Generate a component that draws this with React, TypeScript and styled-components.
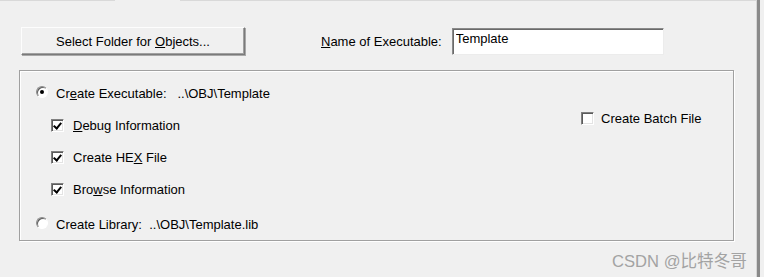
import React from 'react';
import styled, { createGlobalStyle } from 'styled-components';

const GlobalStyle = createGlobalStyle`
  html, body {
    margin: 0;
    padding: 0;
    background: #f0f0f0;
  }
  body {
    font-family: 'Liberation Sans', Arial, sans-serif;
    font-size: 13px;
    color: #000;
  }
`;

export default function App() {
  return (
    <>
      <GlobalStyle />
      <Page>
        <Panel>
          <TabEdge>
            <EdgeSegment $width={115} />
            <EdgeGap />
            <EdgeSegment />
          </TabEdge>
          <TopRow>
            <PushButton>
              Select Folder for <u>O</u>bjects...
            </PushButton>
            <NameField>
              <Label>
                <u>N</u>ame of Executable:
              </Label>
              <TextInput defaultValue="Template" />
            </NameField>
          </TopRow>
          <GroupBox>
            <LeftColumn>
              <OptionRow>
                <Radio $checked />
                <RadioText>
                  Cr<u>e</u>ate Executable:&nbsp;&nbsp;&nbsp;..\OBJ\Template
                </RadioText>
              </OptionRow>
              <SubRow $top={14}>
                <CheckBox $checked />
                <CheckText>
                  <u>D</u>ebug Information
                </CheckText>
              </SubRow>
              <SubRow $top={14}>
                <CheckBox $checked />
                <CheckText>
                  Create HE<u>X</u> File
                </CheckText>
              </SubRow>
              <SubRow $top={14}>
                <CheckBox $checked />
                <CheckText>
                  Bro<u>w</u>se Information
                </CheckText>
              </SubRow>
              <OptionRow $top={17}>
                <Radio />
                <RadioText>Create Library:&nbsp;&nbsp;..\OBJ\Template.lib</RadioText>
              </OptionRow>
            </LeftColumn>
            <RightColumn>
              <SubRow>
                <CheckBox />
                <CheckText $gap={7}>Create Batch File</CheckText>
              </SubRow>
            </RightColumn>
          </GroupBox>
        </Panel>
        <Watermark>CSDN @比特冬哥</Watermark>
      </Page>
    </>
  );
}

const Page = styled.div`
  position: relative;
  width: 764px;
  height: 277px;
  background: #f0f0f0;
  overflow: hidden;
`;

const Panel = styled.div`
  width: 757px;
  height: 277px;
  border-right: 3px solid #8a8a8a;
  box-shadow: inset -1px 0 0 #d6d6d6;
`;

const TabEdge = styled.div`
  display: flex;
  height: 1px;
`;

const EdgeSegment = styled.div<{ $width?: number }>`
  height: 1px;
  background: #d9d9d9;
  ${p => (p.$width ? `width: ${p.$width}px;` : 'flex: 1;')}
`;

const EdgeGap = styled.div`
  width: 65px;
`;

const TopRow = styled.div`
  display: flex;
  align-items: center;
  gap: 76px;
  padding: 26px 0 0 21px;
  height: 28px;
`;

const PushButton = styled.button`
  width: 224px;
  height: 28px;
  box-sizing: border-box;
  font: inherit;
  color: #000;
  background: #f0f0f0;
  border: 1px solid;
  border-color: #fdfdfd #7a7a7a #7a7a7a #fdfdfd;
  box-shadow: inset -1px -1px 0 #a0a0a0, 1px 1px 0 #a8a8a8;
  padding: 0;
  text-align: center;
`;

const NameField = styled.div`
  display: flex;
  align-items: center;
  gap: 10px;
`;

const Label = styled.span`
  white-space: nowrap;
`;

const TextInput = styled.input`
  width: 212px;
  height: 27px;
  box-sizing: border-box;
  font: inherit;
  color: #000;
  background: #fff;
  border: 1px solid;
  border-color: #8a8a8a #ececec #ececec #8a8a8a;
  box-shadow: inset 1px 1px 0 #6a6a6a;
  padding: 0 0 6px 3px;
  outline: none;
`;

const GroupBox = styled.div`
  display: flex;
  margin: 15px 0 0 19px;
  width: 715px;
  height: 171px;
  box-sizing: border-box;
  border: 1px solid #a0a0a0;
  box-shadow: inset 1px 1px 0 #fff, 1px 1px 0 #fff;
  padding: 13px 0 0 16px;
`;

const LeftColumn = styled.div`
  display: flex;
  flex-direction: column;
  flex: 1;
`;

const RightColumn = styled.div`
  width: 152px;
  padding-top: 25px;
`;

const OptionRow = styled.div<{ $top?: number }>`
  display: flex;
  align-items: center;
  height: 18px;
  margin-top: ${p => p.$top ?? 0}px;
`;

const SubRow = styled.div<{ $top?: number }>`
  display: flex;
  align-items: center;
  height: 18px;
  margin-top: ${p => p.$top ?? 0}px;
  padding-left: ${p => (p.$top === undefined ? 0 : 15)}px;
`;

const Radio = styled.span<{ $checked?: boolean }>`
  position: relative;
  width: 12px;
  height: 12px;
  box-sizing: border-box;
  border-radius: 50%;
  border: 1px solid;
  border-color: #8a8a8a #ffffff #ffffff #8a8a8a;
  background: #fff;
  box-shadow: inset 1px 1px 0 #5e5e5e;
  flex-shrink: 0;
  margin-top: -3px;

  &::after {
    content: '';
    display: ${p => (p.$checked ? 'block' : 'none')};
    position: absolute;
    left: 3px;
    top: 3px;
    width: 4px;
    height: 4px;
    border-radius: 50%;
    background: #000;
  }
`;

const RadioText = styled.span`
  margin-left: 8px;
  white-space: nowrap;
`;

const CheckBox = styled.span<{ $checked?: boolean }>`
  position: relative;
  width: 13px;
  height: 13px;
  box-sizing: border-box;
  border: 1px solid;
  border-color: #808080 #ffffff #ffffff #808080;
  box-shadow: inset 1px 1px 0 #5a5a5a, inset -1px -1px 0 #e3e3e3;
  background: #fff;
  flex-shrink: 0;

  &::after {
    content: '';
    display: ${p => (p.$checked ? 'block' : 'none')};
    position: absolute;
    left: 3px;
    top: 1px;
    width: 3px;
    height: 6px;
    border: solid #000;
    border-width: 0 2px 2px 0;
    transform: rotate(40deg);
  }
`;

const CheckText = styled.span<{ $gap?: number }>`
  margin-left: ${p => p.$gap ?? 9}px;
  white-space: nowrap;
`;

const Watermark = styled.div`
  position: absolute;
  left: 612px;
  top: 248px;
  font-family: 'Liberation Sans', 'Noto Sans CJK SC', sans-serif;
  font-size: 16.6px;
  color: #a3a3a3;
  white-space: nowrap;
`;
